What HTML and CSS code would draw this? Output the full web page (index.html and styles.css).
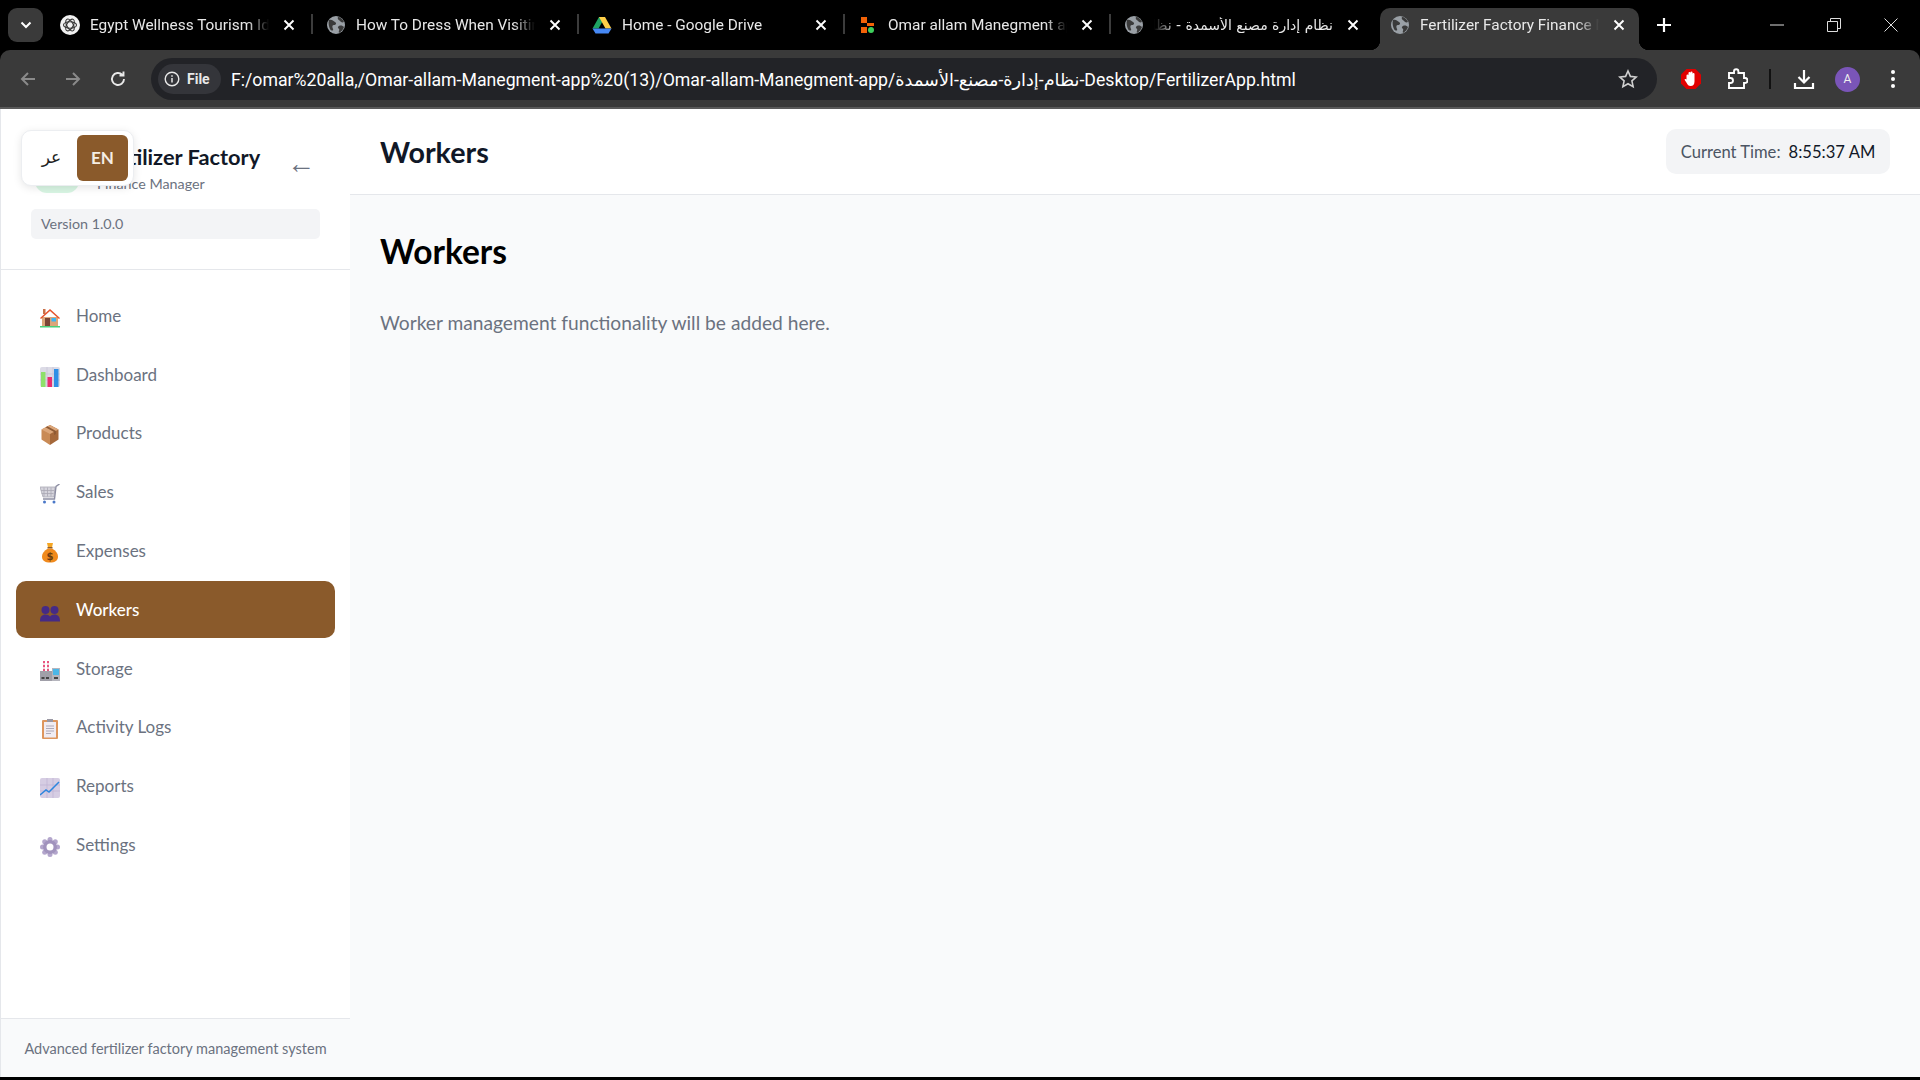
FILE: index.html
```html
<!DOCTYPE html>
<html lang="en">
  <head>
    <meta charset="UTF-8" />
    <title>Fertilizer Factory Finance Manager</title>
    <link rel="stylesheet" href="styles.css">
  </head>
  <body>
    <svg class="icon-defs" width="0" height="0">
      <defs>
        <symbol id="globe" viewBox="0 0 20 20">
          <circle cx="10" cy="10" r="9" fill="#9aa0a6" />
          <path d="M3 5c3-1 4 1 6 2s1 3-1 3-2 2-1 4-2 2-3 0-2-6-1-9zM12 2c2 0 5 2 6 5-2 1-3 0-4-1s-3-2-2-4zM13 11c2-1 4 0 5 1-1 3-3 5-5 6-1-2 1-3 0-4s-2-2 0-3z" fill="#3a3a3a" />
        </symbol>
        <symbol id="close-x" viewBox="0 0 12 12">
          <path d="M1.500 1.500l9 9M10.500 1.500l-9 9" stroke="#fff" stroke-width="1.900" fill="none" />
        </symbol>
      </defs>
    </svg>

    <div class="tabstrip">
      <div class="tab-search">
        <svg width="12" height="8" viewBox="0 0 12 8"><path d="M1.500 1.500L6 6l4.500-4.500" stroke="#fff" stroke-width="2" fill="none" /></svg>
      </div>
      <div class="tab">
        <svg class="favicon" viewBox="0 0 20 20">
          <circle cx="10" cy="10" r="10" fill="#f1f1f1" />
          <g fill="none" stroke="#333" stroke-width="1.100">
            <ellipse cx="10" cy="10" rx="6.500" ry="3.200" />
            <ellipse cx="10" cy="10" rx="6.500" ry="3.200" transform="rotate(60 10 10)" />
            <ellipse cx="10" cy="10" rx="6.500" ry="3.200" transform="rotate(120 10 10)" />
          </g>
        </svg>
        <span class="tab-title">Egypt Wellness Tourism Ideas</span>
        <svg class="tab-close"><use href="#close-x" /></svg>
      </div>
      <div class="tab">
        <svg class="favicon"><use href="#globe" /></svg>
        <span class="tab-title">How To Dress When Visiting Egypt</span>
        <svg class="tab-close"><use href="#close-x" /></svg>
      </div>
      <div class="tab">
        <svg class="favicon" viewBox="0 0 20 20">
          <path d="M7 2h6l-6.500 11.500h-6z" fill="#1fa463" />
          <path d="M13 2l6.500 11.500h-6L7 2z" fill="#ffcf48" />
          <path d="M.5 13.500h19L16.500 18.500H3.500z" fill="#4688f4" />
        </svg>
        <span class="tab-title">Home - Google Drive</span>
        <svg class="tab-close"><use href="#close-x" /></svg>
      </div>
      <div class="tab">
        <svg class="favicon" viewBox="0 0 20 20">
          <rect x="3" y="2" width="6" height="6" fill="#f26207" />
          <rect x="9" y="8" width="7" height="3" fill="#f26207" />
          <rect x="3" y="12" width="6" height="6" fill="#f26207" />
          <circle cx="13" cy="15" r="3" fill="#3ecf5c" />
        </svg>
        <span class="tab-title">Omar allam Manegment app</span>
        <svg class="tab-close"><use href="#close-x" /></svg>
      </div>
      <div class="tab">
        <svg class="favicon"><use href="#globe" /></svg>
        <span class="tab-title tab-title-rtl" dir="rtl">نظام إدارة مصنع الأسمدة - نظام إدارة</span>
        <svg class="tab-close"><use href="#close-x" /></svg>
      </div>
      <div class="tab tab-active">
        <svg class="favicon"><use href="#globe" /></svg>
        <span class="tab-title">Fertilizer Factory Finance Manager</span>
        <svg class="tab-close"><use href="#close-x" /></svg>
      </div>
      <svg class="new-tab" width="16" height="16" viewBox="0 0 16 16"><path d="M8 1v14M1 8h14" stroke="#fff" stroke-width="2.200" /></svg>
      <div class="window-controls">
        <svg width="14" height="14" viewBox="0 0 14 14"><path d="M0 7h14" stroke="#ddd" stroke-width="1" /></svg>
        <svg width="14" height="14" viewBox="0 0 14 14"><path d="M.5 3.500h10v10H.500zM3.500 3.500V.5h10v10h-3" stroke="#ddd" fill="none" /></svg>
        <svg width="14" height="14" viewBox="0 0 14 14"><path d="M.5.5l13 13M13.500.5l-13 13" stroke="#ddd" fill="none" /></svg>
      </div>
    </div>

    <div class="toolbar">
      <svg class="nav-btn" viewBox="0 0 18 18"><path d="M16 9H3M9 3L3 9l6 6" stroke="#8a8a8a" stroke-width="2" fill="none" /></svg>
      <svg class="nav-btn" viewBox="0 0 18 18"><path d="M2 9h13M9 3l6 6-6 6" stroke="#8a8a8a" stroke-width="2" fill="none" /></svg>
      <svg class="nav-btn" viewBox="0 0 18 18"><path d="M15 9a6 6 0 1 1-1.800-4.300M14.500 1.500v4h-4" stroke="#e8e8e8" stroke-width="1.900" fill="none" /></svg>
      <div class="omnibox">
        <div class="file-chip">
          <svg width="16" height="16" viewBox="0 0 16 16">
            <circle cx="8" cy="8" r="6.800" stroke="#e8e8e8" stroke-width="1.400" fill="none" />
            <path d="M8 7v4.500M8 4.200v1.600" stroke="#e8e8e8" stroke-width="1.500" />
          </svg>
          <span>File</span>
        </div>
        <span class="url">F:/omar%20alla,/Omar-allam-Manegment-app%20(13)/Omar-allam-Manegment-app/نظام-إدارة-مصنع-الأسمدة-Desktop/FertilizerApp.html</span>
        <svg class="star" width="20" height="20" viewBox="0 0 20 20"><path d="M10 2l2.400 5.400 5.800.6-4.300 3.900 1.200 5.700-5.100-2.900-5.100 2.900 1.200-5.700L1.800 8l5.800-.6z" stroke="#d0d0d0" stroke-width="1.600" fill="none" /></svg>
      </div>
      <svg class="ext-block" width="22" height="22" viewBox="0 0 22 22">
        <path d="M6.500 1h9L21 6.500v9L15.500 21h-9L1 15.500v-9z" fill="#e00000" />
        <path d="M6.500 11.500V7.500a1 1 0 0 1 2 0V5a1 1 0 0 1 2 0V4.500a1 1 0 0 1 2 0V6a1 1 0 0 1 2 0v7.500c0 3-1.500 4.500-3.800 4.500s-3-1-4-3l-2-3c-.500-1 1.300-1.500 1.800-.5z" fill="#fff" />
      </svg>
      <svg class="ext-puzzle" width="22" height="22" viewBox="0 0 22 22">
        <path d="M3 5h5V3.500a2.200 2.200 0 0 1 4.400 0V5H18v5h1a2.500 2.500 0 0 1 0 5h-1v5H3v-5h1.500a2.500 2.500 0 0 0 0-5H3z" stroke="#fff" stroke-width="1.900" fill="none" />
      </svg>
      <span class="toolbar-sep"></span>
      <svg class="download" width="22" height="22" viewBox="0 0 22 22">
        <path d="M11 2v12M5.500 9l5.500 5.500L16.500 9M2 15v5h18v-5" stroke="#fff" stroke-width="2.200" fill="none" />
      </svg>
      <span class="avatar">A</span>
      <svg class="menu-dots" width="6" height="20" viewBox="0 0 6 20">
        <circle cx="3" cy="3" r="2" fill="#fff" /><circle cx="3" cy="10" r="2" fill="#fff" /><circle cx="3" cy="17" r="2" fill="#fff" />
      </svg>
    </div>

    <div class="app">
      <aside class="sidebar">
        <div class="lang-switch">
          <button class="lang-btn">عر</button>
          <button class="lang-btn lang-active">EN</button>
        </div>
        <div class="sidebar-header">
          <div class="brand">
            <div class="brand-logo"></div>
            <div class="brand-text">
              <h1>Fertilizer Factory</h1>
              <p>Finance Manager</p>
            </div>
            <span class="collapse-arrow">←</span>
          </div>
          <div class="version">Version 1.0.0</div>
        </div>

        <nav class="nav">
          <a class="nav-item">
            <svg class="nav-icon" viewBox="0 0 20 20">
              <rect x="3" y="1" width="2.500" height="5" fill="#c9714a" />
              <path d="M2 9h16v9H2z" fill="#dca679" />
              <path d="M10 1L0 10l1 1 9-8 9 8 1-1z" fill="#e5532d" />
              <rect x="5" y="10" width="5" height="8" fill="#7a4435" />
              <rect x="11.500" y="10" width="4.500" height="3.500" fill="#3db4f2" />
              <rect y="18" width="20" height="1.500" fill="#4bd07a" />
            </svg>
            <span>Home</span>
          </a>
          <a class="nav-item">
            <svg class="nav-icon" viewBox="0 0 20 20">
              <rect width="20" height="20" rx="2" fill="#dcdbe6" />
              <path d="M0 7h20M0 13h20M7 0v20M13 0v20" stroke="#c5c3d4" stroke-width=".7" />
              <rect x="1" y="5" width="4.500" height="15" fill="#8ee06a" />
              <rect x="7.500" y="10" width="4.500" height="10" fill="#e92d6f" />
              <rect x="14" y="2" width="4.500" height="18" fill="#2e8fe6" />
            </svg>
            <span>Dashboard</span>
          </a>
          <a class="nav-item">
            <svg class="nav-icon" viewBox="0 0 20 20">
              <path d="M10 0l8.500 4.500v10L10 20z" fill="#a5683a" />
              <path d="M10 0L1.500 4.500v10L10 20z" fill="#c98a55" />
              <path d="M1.500 4.500L10 9l8.500-4.500L10 0z" fill="#dca679" />
              <path d="M5.500 2.300L14 7v3l2-1V6L7.500 1.300z" fill="#8e5a34" />
            </svg>
            <span>Products</span>
          </a>
          <a class="nav-item">
            <svg class="nav-icon" viewBox="0 0 20 20">
              <path d="M0 3h15l-1 10H3z" fill="#d5d4dc" stroke="#a9a8b4" stroke-width=".8" />
              <path d="M4 3.500v9M7.500 3.500v9M11 3.500v9M1 6.500h13M1.500 9.500h12" stroke="#a9a8b4" stroke-width=".8" />
              <path d="M19.500 0L16 2.500 14.500 15H3" stroke="#8d8ea3" stroke-width="1.400" fill="none" />
              <circle cx="4.500" cy="18" r="1.500" fill="#4a78c8" />
              <circle cx="14" cy="18" r="1.500" fill="#4a78c8" />
            </svg>
            <span>Sales</span>
          </a>
          <a class="nav-item">
            <svg class="nav-icon" viewBox="0 0 20 20">
              <path d="M7 0h6l-1 4.500H8z" fill="#f5a623" />
              <rect x="7.500" y="4" width="5" height="1.500" fill="#8a5a2b" />
              <path d="M8 5.500h4c4 2 6 5 6 8 0 4-3 6-8 6s-8-2-8-6c0-3 2-6 6-8z" fill="#f08a1d" />
              <text class="bag-sign" x="10" y="16.500">$</text>
            </svg>
            <span>Expenses</span>
          </a>
          <a class="nav-item nav-active">
            <svg class="nav-icon" viewBox="0 0 20 20">
              <circle cx="5.500" cy="8" r="4" fill="#452a86" />
              <circle cx="14.500" cy="8" r="4" fill="#452a86" />
              <path d="M0 19.500c0-5 2-7 5.500-7 2 0 3.500.7 4.500 2 1-1.300 2.500-2 4.500-2 3.500 0 5.500 2 5.500 7z" fill="#452a86" />
            </svg>
            <span>Workers</span>
          </a>
          <a class="nav-item">
            <svg class="nav-icon" viewBox="0 0 20 20">
              <path d="M3 0h2v11H3zM7 0h2v11H7z" fill="#e8557f" />
              <path d="M3 2h2v2H3zM7 2h2v2H7zM3 6h2v2H3zM7 6h2v2H7z" fill="#f3d6de" />
              <path d="M0 10l12 0v10H0z" fill="#a09fa8" />
              <rect x="12" y="7" width="8" height="13" fill="#b5b5bd" />
              <rect x="13" y="8" width="6" height="6" fill="#4cb7e8" />
              <rect x="1.500" y="16" width="3" height="2" fill="#444" />
              <rect x="6" y="16" width="3" height="2" fill="#444" />
              <rect x="14" y="16" width="4" height="2" fill="#444" />
            </svg>
            <span>Storage</span>
          </a>
          <a class="nav-item">
            <svg class="nav-icon" viewBox="0 0 20 20">
              <rect x="2" y="1" width="16" height="19" rx="1" fill="#dd965f" />
              <rect x="4" y="3" width="12" height="15.500" fill="#f0ecf3" />
              <rect x="7" y="0" width="6" height="3" fill="#9a98a3" />
              <path d="M6 7h8M6 9.500h8M6 12h8M6 14.500h5" stroke="#a5a3b3" stroke-width=".9" />
            </svg>
            <span>Activity Logs</span>
          </a>
          <a class="nav-item">
            <svg class="nav-icon" viewBox="0 0 20 20">
              <rect width="20" height="20" rx="2" fill="#d6cde3" />
              <path d="M0 7h20M0 13h20M7 0v20M13 0v20" stroke="#bfb3d1" stroke-width=".7" />
              <path d="M0 17l6-5 3 2 10-10" stroke="#2e86de" stroke-width="1.500" fill="none" />
            </svg>
            <span>Reports</span>
          </a>
          <a class="nav-item">
            <svg class="nav-icon" viewBox="0 0 20 20">
              <g fill="#b3a6cc">
                <circle cx="10" cy="2.500" r="2.500" /><circle cx="10" cy="17.500" r="2.500" />
                <circle cx="2.500" cy="10" r="2.500" /><circle cx="17.500" cy="10" r="2.500" />
                <circle cx="4.700" cy="4.700" r="2.500" /><circle cx="15.300" cy="4.700" r="2.500" />
                <circle cx="4.700" cy="15.300" r="2.500" /><circle cx="15.300" cy="15.300" r="2.500" />
              </g>
              <circle cx="10" cy="10" r="7" fill="#a193bd" />
              <circle cx="10" cy="10" r="3.500" fill="#fff" />
            </svg>
            <span>Settings</span>
          </a>
        </nav>

        <div class="sidebar-footer">Advanced fertilizer factory management system</div>
      </aside>

      <main class="main">
        <header class="topbar">
          <div class="topbar-title">Workers</div>
          <div class="clock">
            <span class="clock-label">Current Time:</span>
            <span class="clock-value">8:55:37 AM</span>
          </div>
        </header>
        <section class="content">
          <h2>Workers</h2>
          <p>Worker management functionality will be added here.</p>
        </section>
      </main>
    </div>
  </body>
</html>
```

FILE: styles.css
```css
* {
  box-sizing: border-box;
}
html,
body {
  height: 100%;
}
body {
  margin: 0;
  background: #000;
  font-family: "Lato", "DejaVu Sans", sans-serif;
  display: flex;
  flex-direction: column;
  padding-bottom: 3px;
  overflow: hidden;
}
.icon-defs {
  position: absolute;
}

/* browser tabs */
.tabstrip {
  height: 50px;
  flex-shrink: 0;
  background: #000;
  display: flex;
  align-items: flex-end;
  padding-left: 8px;
  font-family: "Roboto", "DejaVu Sans", sans-serif;
  color: #e8e8e8;
}
.tab-search {
  width: 35px;
  height: 34px;
  margin: 0 7px 8px 0;
  background: #3a3a3a;
  border-radius: 9px;
  display: flex;
  align-items: center;
  justify-content: center;
}
.tab {
  width: 258px;
  height: 42px;
  margin: 0 4px;
  padding: 0 17px 0 6px;
  display: flex;
  align-items: center;
  position: relative;
  border-radius: 10px 10px 0 0;
  font-size: 15.400px;
}
.tab:not(.tab-active):not(:nth-last-child(4))::after {
  content: "";
  position: absolute;
  right: -1px;
  top: 6px;
  width: 2px;
  height: 20px;
  background: #3c3c3c;
}
.tab-active {
  width: 259px;
  margin-left: 0;
  padding: 0 14px 0 10px;
  background: #3a3a3a;
}
.tab-active::before,
.tab-active::after {
  content: "";
  position: absolute;
  bottom: 0;
  width: 10px;
  height: 10px;
}
.tab-active::before {
  left: -10px;
  background: radial-gradient(circle at 0 0, transparent 10px, #3a3a3a 10.500px);
}
.tab-active::after {
  right: -10px;
  background: radial-gradient(circle at 100% 0, transparent 10px, #3a3a3a 10.500px);
}
.favicon {
  width: 20px;
  height: 20px;
  flex-shrink: 0;
  margin: -8px 10px 0 0;
}
.tab-title {
  flex: 1;
  min-width: 0;
  margin-top: -8px;
  white-space: nowrap;
  overflow: hidden;
  -webkit-mask-image: linear-gradient(to right, #000 88%, transparent 100%);
  mask-image: linear-gradient(to right, #000 88%, transparent 100%);
}
.tab-title-rtl {
  font-family: "DejaVu Sans", sans-serif;
  font-size: 14px;
  -webkit-mask-image: linear-gradient(to left, #000 88%, transparent 100%);
  mask-image: linear-gradient(to left, #000 88%, transparent 100%);
}
.tab-close {
  width: 12px;
  height: 12px;
  flex-shrink: 0;
  margin: -8px 0 0 14px;
}
.new-tab {
  margin: 0 0 17px 13px;
}
.window-controls {
  margin: 0 22px 18px auto;
  display: flex;
  gap: 43px;
}

/* browser toolbar */
.toolbar {
  height: 59px;
  flex-shrink: 0;
  background: #3a3a3a;
  border-bottom: 2px solid #5a5a5a;
  border-radius: 10px 10px 0 0;
  display: flex;
  align-items: center;
  padding: 1px 0 0 19px;
}
.nav-btn {
  width: 18px;
  height: 18px;
  margin-right: 27px;
  flex-shrink: 0;
}
.omnibox {
  width: 1506px;
  height: 42px;
  margin-left: -3px;
  background: #222327;
  border-radius: 21px;
  display: flex;
  align-items: center;
  padding: 0 19px 0 7px;
  color: #fff;
}
.file-chip {
  width: 63px;
  height: 30px;
  background: #34353a;
  border-radius: 15px;
  display: flex;
  align-items: center;
  gap: 7px;
  padding-left: 6px;
  font: 700 14px "Roboto", sans-serif;
  color: #e8e8e8;
}
.url {
  margin-left: 10px;
  padding-top: 2px;
  font: 17.700px "Roboto", "DejaVu Sans", sans-serif;
  white-space: nowrap;
}
.star {
  margin-left: auto;
}
.ext-block {
  margin-left: 23px;
}
.ext-puzzle {
  margin-left: 24px;
}
.toolbar-sep {
  width: 2px;
  height: 20px;
  background: #111;
  margin-left: 21px;
}
.download {
  margin-left: 22px;
}
.avatar {
  width: 25px;
  height: 25px;
  margin-left: 20px;
  border-radius: 50%;
  background: #7a55b8;
  color: #eee;
  font: 12px/25px "Roboto", sans-serif;
  text-align: center;
}
.menu-dots {
  margin-left: 30px;
}

/* app */
.app {
  flex: 1;
  min-height: 0;
  display: flex;
  background: #f9fafb;
}
.sidebar {
  width: 350px;
  flex-shrink: 0;
  background: #fff;
  border-left: 1px solid #e5e7eb;
  display: flex;
  flex-direction: column;
  position: relative;
}
.lang-switch {
  position: absolute;
  left: 20px;
  top: 21px;
  width: 113px;
  height: 56px;
  background: #fff;
  border: 1px solid #eceef1;
  border-radius: 10px;
  box-shadow: 0 2px 8px rgba(0, 0, 0, 0.1);
  display: flex;
  align-items: center;
  justify-content: space-between;
  padding: 0 5px 0 4px;
}
.lang-btn {
  width: 52px;
  height: 46px;
  border: none;
  border-radius: 6px;
  background: transparent;
  color: #222;
  font: 17px "DejaVu Sans", sans-serif;
  padding: 0 0 2px;
}
.lang-active {
  background: #8a5a2b;
  color: #f5ede4;
  font: 700 17px "Lato", sans-serif;
}
.sidebar-header {
  height: 161px;
  flex-shrink: 0;
  padding: 32px 30px 0;
  border-bottom: 1px solid #e5e7eb;
}
.brand {
  display: flex;
  align-items: center;
  height: 56px;
}
.brand-logo {
  width: 44px;
  height: 44px;
  margin: 4px 18px 0 4px;
  border-radius: 12px;
  background: #d8f5e3;
}
.brand-text h1 {
  margin: 0;
  font-size: 21.800px;
  line-height: 27px;
  font-weight: 700;
  color: #111827;
  white-space: nowrap;
}
.brand-text p {
  margin: 0;
  padding-top: 2px;
  font-size: 14.300px;
  line-height: 24px;
  color: #6b7280;
}
.collapse-arrow {
  margin: 0 5px 10px auto;
  font: 28px "Liberation Sans", sans-serif;
  color: #6b7280;
}
.version {
  height: 30px;
  margin-top: 12px;
  padding-left: 10px;
  background: #f3f4f6;
  border-radius: 5px;
  font-size: 14.300px;
  line-height: 30px;
  color: #6b7280;
}
.nav {
  flex: 1;
  padding: 17px 15px 0;
  display: flex;
  flex-direction: column;
  gap: 2px;
}
.nav-item {
  height: 56.800px;
  padding-left: 24px;
  display: flex;
  align-items: center;
  gap: 16px;
  border-radius: 10px;
  font-size: 17px;
  color: #6b7280;
}
.nav-icon {
  width: 20px;
  height: 20px;
  flex-shrink: 0;
  margin-top: 5px;
}
.bag-sign {
  font: 700 10px "DejaVu Sans", sans-serif;
  text-anchor: middle;
  fill: #6b3d10;
}
.nav-active {
  background: #8a5a2b;
  color: #fff;
  font-weight: 500;
}
.sidebar-footer {
  height: 59px;
  flex-shrink: 0;
  background: #f9fafb;
  border-top: 1px solid #e5e7eb;
  font-size: 14.500px;
  line-height: 60px;
  text-align: center;
  color: #6b7280;
}
.main {
  flex: 1;
  min-width: 0;
  display: flex;
  flex-direction: column;
}
.topbar {
  height: 86px;
  flex-shrink: 0;
  background: #fff;
  border-bottom: 1px solid #e5e7eb;
  padding: 0 30px;
  display: flex;
  align-items: center;
  justify-content: space-between;
}
.topbar-title {
  font-size: 28.700px;
  font-weight: 700;
  color: #111827;
}
.clock {
  height: 45px;
  width: 224px;
  background: #f3f4f6;
  border-radius: 10px;
  display: flex;
  align-items: center;
  justify-content: center;
  gap: 8px;
  font-size: 16.600px;
  color: #4b5563;
}
.clock-value {
  color: #111827;
}
.content {
  padding: 32px 30px;
}
.content h2 {
  margin: 0;
  font-size: 33.500px;
  line-height: 48px;
  font-weight: 700;
  color: #000;
}
.content p {
  margin: 33px 0 0;
  font-size: 19.200px;
  line-height: 30px;
  color: #6b7280;
}
```
